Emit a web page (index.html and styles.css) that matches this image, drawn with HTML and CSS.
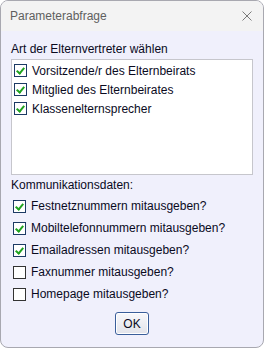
FILE: index.html
```html
<!DOCTYPE html>
<html lang="de">
    <head>
        <meta charset="utf-8">
        <title>Parameterabfrage</title>
        <link rel="stylesheet" href="styles.css">
    </head>
    <body>
        <div id="window">
            <div id="titlebar">
                <span id="title">Parameterabfrage</span>
                <svg id="close" width="10" height="10" viewBox="0 0 10 10">
                    <path d="M0.5 0.5 L9.5 9.5 M9.5 0.5 L0.5 9.5" stroke="#7a7a7a" stroke-width="1" fill="none"/>
                </svg>
            </div>
            <div id="content">
                <p class="label">Art der Elternvertreter wählen</p>
                <div id="listbox">
                    <div class="item"><span class="box checked"></span>Vorsitzende/r des Elternbeirats</div>
                    <div class="item"><span class="box checked"></span>Mitglied des Elternbeirates</div>
                    <div class="item"><span class="box checked"></span>Klassenelternsprecher</div>
                </div>
                <p class="label">Kommunikationsdaten:</p>
                <div id="options">
                    <div class="option"><span class="box checked"></span>Festnetznummern mitausgeben?</div>
                    <div class="option"><span class="box checked"></span>Mobiltelefonnummern mitausgeben?</div>
                    <div class="option"><span class="box checked"></span>Emailadressen mitausgeben?</div>
                    <div class="option"><span class="box"></span>Faxnummer mitausgeben?</div>
                    <div class="option"><span class="box"></span>Homepage mitausgeben?</div>
                </div>
                <div id="buttons">
                    <button>OK</button>
                </div>
            </div>
        </div>
    </body>
</html>
```

FILE: styles.css
```css
body {
    margin: 0;
    background: #fff;
    font-family: "Liberation Sans", Arial, sans-serif;
    font-size: 12px;
    color: #0a0a1e;
}

#window {
    width: 264px;
    height: 348px;
    box-sizing: border-box;
    border: 1px solid #a8a8b0;
    border-radius: 8px;
    overflow: hidden;
    background: #f0f0fc;
}

#titlebar {
    height: 30px;
    display: flex;
    align-items: center;
    justify-content: space-between;
    padding: 0 11px 0 9px;
    background: #f3f3f3;
}

#title {
    color: #5f5f5f;
    font-size: 12px;
}

#content {
    padding: 11px 10px 0 10px;
}

.label {
    margin: 0;
    line-height: 14px;
}

#listbox {
    margin: 3px 0 3px 0;
    height: 116px;
    box-sizing: border-box;
    border: 1px solid #c6c6cc;
    background: #fff;
    padding: 1px 0 0 2px;
}

.item {
    height: 19px;
    display: flex;
    align-items: center;
}

.option {
    height: 22px;
    display: flex;
    align-items: center;
    padding-left: 2px;
}

#options {
    margin-top: 3px;
}

.box {
    width: 13px;
    height: 13px;
    box-sizing: border-box;
    border: 1px solid #1c3a64;
    background: #fff;
    margin-right: 5px;
    flex: none;
    position: relative;
}

.option .box {
    border-color: #333;
}

.option .box.checked {
    border-color: #1c3a64;
}

.box.checked::after {
    content: "";
    position: absolute;
    left: 3px;
    top: 1px;
    width: 3px;
    height: 6px;
    border: solid #1fa31f;
    border-width: 0 2px 2px 0;
    transform: rotate(40deg);
}

#buttons {
    display: flex;
    justify-content: center;
    margin-top: 7px;
}

#buttons button {
    width: 34px;
    height: 23px;
    padding: 0;
    font-family: inherit;
    font-size: 12px;
    color: #0a0a1e;
    border: 1px solid #3a5e9a;
    border-radius: 3px;
    background: linear-gradient(#f8f8fb, #e2e3ea);
    box-shadow: inset 0 0 0 1px #fff;
}
```
